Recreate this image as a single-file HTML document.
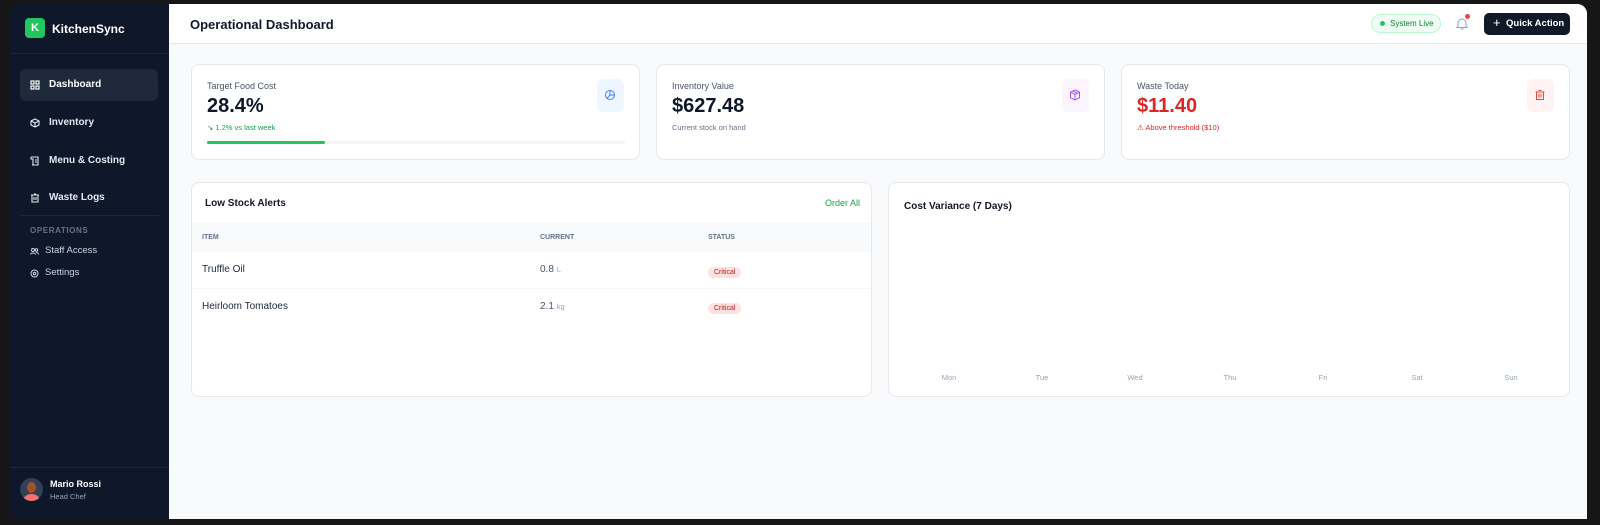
<!DOCTYPE html>
<html><head><meta charset="utf-8"><style>
*{box-sizing:border-box;margin:0;padding:0}
body{width:1600px;height:525px;background:#161616;font-family:"Liberation Sans",sans-serif;position:relative;overflow:hidden}
.sb{position:absolute;left:10px;top:4px;width:159px;height:515px;background:#0f172a;border-radius:10px 0 0 10px;color:#e2e8f0}
.logo{position:absolute;left:15px;top:14px;width:20px;height:20px;background:#22c55e;border-radius:4px;color:#fff;font-weight:bold;font-size:11px;text-align:center;line-height:20px}
.brand{position:absolute;left:42px;top:18px;font-weight:bold;font-size:12px;color:#fff}
.hr{position:absolute;left:0;right:0;height:1px;background:#1e293b}
.nav{position:absolute;left:10px;width:138px;height:32px;border-radius:6px;font-size:10px;font-weight:bold;color:#e2e8f0;line-height:32px;padding-left:29px}
.nav.act{background:#1e293b;color:#fff}
.nav svg,.sub svg{position:absolute;left:10px;top:11px}
.sec{position:absolute;left:20px;top:222px;font-size:8px;font-weight:bold;letter-spacing:.6px;color:#64748b}
.sub{position:absolute;left:10px;font-size:9.5px;color:#cbd5e1;padding-left:25px;height:14px;line-height:14px}
.sub svg{top:3px}
.main{position:absolute;left:169px;top:4px;width:1418px;height:515px;background:#f8fafc;border-radius:0 10px 0 0;overflow:hidden}
.hd{position:absolute;left:0;top:0;right:0;height:40px;background:#fff;border-bottom:1px solid #e5e7eb}
.title{position:absolute;left:21px;top:13px;font-size:13px;font-weight:bold;color:#111827}
.pill{position:absolute;left:1202px;top:10px;width:70px;height:19px;border-radius:10px;background:#f0fdf4;border:1px solid #bbf7d0;font-size:8px;color:#15803d;line-height:17px;padding-left:18px;white-space:nowrap}
.pill:before{content:"";position:absolute;left:8px;top:6px;width:5px;height:5px;border-radius:50%;background:#22c55e}
.btn{position:absolute;left:1315px;top:9px;width:86px;height:22px;border-radius:5px;background:#111827;color:#fff;font-size:9.5px;font-weight:bold;line-height:22px;padding-left:22px;white-space:nowrap}
.btn span{position:absolute;left:9px;top:-1px;font-size:13px;font-weight:normal}
.card{position:absolute;background:#fff;border:1px solid #e5e7eb;border-radius:8px}
.lbl{position:absolute;left:15px;top:16px;font-size:9px;color:#4b5563}
.val{position:absolute;left:15px;top:30px;font-size:20px;font-weight:bold;color:#0f172a}
.sm{position:absolute;left:15px;top:58px;font-size:7.5px}
.ib{position:absolute;right:15px;top:14px;width:27px;height:33px;border-radius:6px}
.ib svg{position:absolute;left:7px;top:10px}
th{font-size:7px;color:#64748b;text-align:left;font-weight:bold}
.badge{display:inline-block;background:#fee2e2;color:#b91c1c;font-size:7px;padding:2px 6px;border-radius:6px}
.day{position:absolute;top:190px;font-size:7.5px;color:#94a3b8;transform:translateX(-50%)}
</style></head><body>
<div class="sb">
 <div class="logo">K</div><div class="brand">KitchenSync</div>
 <div class="hr" style="top:49px"></div>
 <div class="nav act" style="top:65px"><svg width="10" height="10" viewBox="0 0 10 10" fill="none" stroke="#fff" stroke-width="1.2"><rect x="1" y="1" width="3" height="3"/><rect x="6" y="1" width="3" height="3"/><rect x="1" y="6" width="3" height="3"/><rect x="6" y="6" width="3" height="3"/></svg>Dashboard</div>
 <div class="nav" style="top:103px"><svg width="10" height="10" viewBox="0 0 10 10" fill="none" stroke="#e2e8f0" stroke-width="1.1"><path d="M5 1L9 3V7L5 9L1 7V3ZM1 3L5 5L9 3M5 5V9"/></svg>Inventory</div>
 <div class="nav" style="top:141px"><svg width="10" height="10" viewBox="0 0 10 10" fill="none" stroke="#e2e8f0" stroke-width="1.1"><path d="M1 1H8V9H3M1 1V3H3V9H2M5 4H7M5 6H7"/></svg>Menu &amp; Costing</div>
 <div class="nav" style="top:178px"><svg width="10" height="10" viewBox="0 0 10 10" fill="none" stroke="#e2e8f0" stroke-width="1.1"><path d="M1 2H9M4 1H6M2 2V9H8V2M4 4V7M6 4V7"/></svg>Waste Logs</div>
 <div class="hr" style="top:211px;left:10px;right:10px"></div>
 <div class="sec">OPERATIONS</div>
 <div class="sub" style="top:240px"><svg width="9" height="8" viewBox="0 0 9 8" fill="none" stroke="#cbd5e1" stroke-width="1"><circle cx="3" cy="3" r="1.5"/><circle cx="6.5" cy="3" r="1.3"/><path d="M0.5 7.5C1 5.5 5 5.5 5.5 7.5M6 5.5C7.5 5.5 8.5 6.5 8.5 7.5"/></svg>Staff Access</div>
 <div class="sub" style="top:262px"><svg width="9" height="9" viewBox="0 0 9 9" fill="none" stroke="#cbd5e1" stroke-width="1"><circle cx="4.5" cy="4.5" r="3.5"/><circle cx="4.5" cy="4.5" r="1.3"/></svg>Settings</div>
 <div class="hr" style="top:463px"></div>
 <div style="position:absolute;left:10px;top:474px;width:23px;height:23px;border-radius:50%;background:#334155;overflow:hidden"><div style="position:absolute;left:7px;top:4px;width:9px;height:11px;border-radius:50%;background:#a0522d"></div><div style="position:absolute;left:4px;top:16px;width:15px;height:10px;border-radius:50%;background:#f87171"></div></div>
 <div style="position:absolute;left:40px;top:475px;font-size:9px;font-weight:bold;color:#fff">Mario Rossi</div>
 <div style="position:absolute;left:40px;top:488px;font-size:7.5px;color:#94a3b8">Head Chef</div>
</div>
<div class="main">
 <div class="hd"><div class="title">Operational Dashboard</div>
  <div class="pill">System Live</div>
  <svg style="position:absolute;left:1287px;top:13px" width="12" height="13" viewBox="0 0 12 13" fill="none" stroke="#94a3b8" stroke-width="1"><path d="M2 9.5V6A4 4 0 0 1 10 6V9.5L11 10.5H1ZM4.5 12H7.5"/></svg>
  <div style="position:absolute;left:1296px;top:10px;width:5px;height:5px;border-radius:50%;background:#ef4444"></div>
  <div class="btn"><span>+</span>Quick Action</div>
 </div>
 <div class="card" style="left:22px;top:60px;width:449px;height:96px">
  <div class="lbl">Target Food Cost</div><div class="val">28.4%</div>
  <div class="sm" style="color:#16a34a">↘ 1.2% vs last week</div>
  <div style="position:absolute;left:15px;top:76px;width:418px;height:3px;background:#f1f5f9;border-radius:2px"><div style="width:118px;height:3px;background:#22c55e;border-radius:2px"></div></div>
  <div class="ib" style="background:#eff6ff"><svg width="12" height="12" viewBox="0 0 12 12" fill="none" stroke="#3b82f6" stroke-width="1"><circle cx="6" cy="6" r="4.5"/><path d="M6 1.5V6H10.5M6 6L3 9.5"/></svg></div>
 </div>
 <div class="card" style="left:487px;top:60px;width:449px;height:96px">
  <div class="lbl">Inventory Value</div><div class="val">$627.48</div>
  <div class="sm" style="color:#64748b">Current stock on hand</div>
  <div class="ib" style="background:#faf5ff"><svg width="12" height="12" viewBox="0 0 12 12" fill="none" stroke="#a855f7" stroke-width="1"><path d="M6 1L10.5 3.2V8.8L6 11L1.5 8.8V3.2ZM1.5 3.2L6 5.5L10.5 3.2M6 5.5V11M3.8 2.1L8.2 4.3"/></svg></div>
 </div>
 <div class="card" style="left:952px;top:60px;width:449px;height:96px">
  <div class="lbl">Waste Today</div><div class="val" style="color:#dc2626">$11.40</div>
  <div class="sm" style="color:#dc2626">⚠ Above threshold ($10)</div>
  <div class="ib" style="background:#fef2f2"><svg width="12" height="12" viewBox="0 0 12 12" fill="none" stroke="#ef4444" stroke-width="1"><path d="M1.5 3H10.5M4.5 1.5H7.5M2.5 3V10.5H9.5V3M5 5V8.5M7 5V8.5"/></svg></div>
 </div>
 <div class="card" style="left:22px;top:178px;width:681px;height:215px;overflow:hidden">
  <div style="position:absolute;left:13px;top:15px;font-size:10px;font-weight:bold;color:#111827">Low Stock Alerts</div>
  <div style="position:absolute;right:11px;top:15px;font-size:9px;color:#16a34a">Order All</div>
  <div style="position:absolute;left:0;right:0;top:40px;height:29px;background:#f8fafc"></div>
  <table style="position:absolute;left:0;top:40px;width:100%;border-collapse:collapse">
   <tr style="height:29px"><th style="padding-left:10px;width:348px">ITEM</th><th style="width:168px">CURRENT</th><th>STATUS</th></tr>
   <tr style="height:36px;border-bottom:1px solid #f1f5f9"><td style="padding-left:10px;font-size:10px;color:#1f2937">Truffle Oil</td><td style="font-size:10px;color:#475569">0.8 <span style="font-size:7.5px;color:#94a3b8">L</span></td><td><span class="badge">Critical</span></td></tr>
   <tr style="height:36px"><td style="padding-left:10px;font-size:10px;color:#1f2937">Heirloom Tomatoes</td><td style="font-size:10px;color:#475569">2.1 <span style="font-size:7.5px;color:#94a3b8">kg</span></td><td><span class="badge">Critical</span></td></tr>
  </table>
 </div>
 <div class="card" style="left:719px;top:178px;width:682px;height:215px">
  <div style="position:absolute;left:15px;top:18px;font-size:10px;font-weight:bold;color:#111827">Cost Variance (7 Days)</div>
  <div class="day" style="left:60px">Mon</div><div class="day" style="left:153px">Tue</div><div class="day" style="left:246px">Wed</div><div class="day" style="left:341px">Thu</div><div class="day" style="left:434px">Fri</div><div class="day" style="left:528px">Sat</div><div class="day" style="left:622px">Sun</div>
 </div>
</div>
</body></html>
